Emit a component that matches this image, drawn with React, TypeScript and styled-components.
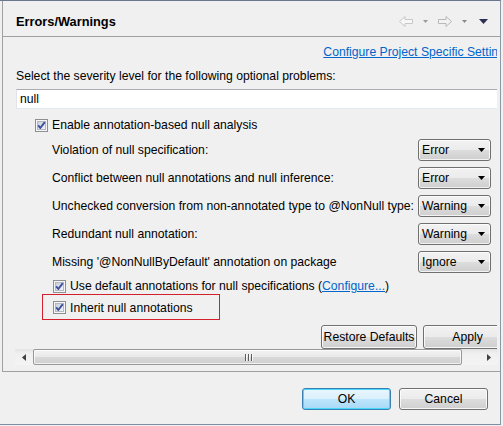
import React from 'react';
import styled, { createGlobalStyle } from 'styled-components';

const Global = createGlobalStyle`
  html, body { margin: 0; padding: 0; background: #f0f0f0; overflow: hidden; }
  body {
    font-family: "Liberation Sans", Arial, sans-serif;
    font-size: 12.2px;
    color: #000;
  }
`;

const Window = styled.div`
  box-sizing: border-box;
  width: 501px;
  height: 425px;
  border-top: 1px solid #6a778c;
  border-right: 1px solid #8c97a8;
  border-bottom: 1px solid #7f8ea5;
  background: #f0f0f0;
  display: flex;
  flex-direction: column;
  overflow: hidden;
`;

const Page = styled.div`
  box-sizing: border-box;
  height: 371px;
  margin-left: 2px;
  border-left: 1px solid #a0a0a0;
  border-bottom: 1px solid #a0a0a0;
  display: flex;
  flex-direction: column;
`;

const Header = styled.div`
  box-sizing: border-box;
  height: 36px;
  flex: none;
  padding: 6px 12px 0 13px;
  border-bottom: 1px solid #a0a0a0;
  display: flex;
  align-items: center;
`;

const Title = styled.h1`
  margin: 0;
  flex: 1;
  font-size: 12.8px;
  font-weight: bold;
  line-height: 16px;
`;

const Toolbar = styled.div`
  display: flex;
  align-items: center;
  gap: 10px;
`;

const Body = styled.div`
  flex: 1;
  display: flex;
  flex-direction: column;
  padding: 0 2px 0 12px;
  min-height: 0;
`;

const Clip = styled.div`
  overflow: hidden;
  margin-right: 1px;
`;

const Content = styled.div`
  box-sizing: border-box;
  width: 497px;
  padding-left: 1px;
  display: flex;
  flex-direction: column;
`;

const LinkRow = styled.div`
  margin-top: 7px;
  height: 16px;
  line-height: 16px;
  text-align: right;
  padding-right: 1px;
  white-space: nowrap;
`;

const Link = styled.a`
  color: #0066cc;
  text-decoration: underline;
  cursor: pointer;
`;

const Description = styled.div`
  margin-top: 8px;
  height: 16px;
  line-height: 16px;
  white-space: nowrap;
`;

const Filter = styled.input`
  box-sizing: border-box;
  margin: 5px 0 0 0;
  width: 100%;
  height: 20px;
  border: 1px solid #abadb3;
  border-color: #abadb3 #dbdfe6 #e3e9ef #e2e3ea;
  background: #fff;
  padding: 0 3px;
  font: inherit;
  color: #000;
  outline: none;
`;

const CheckRow = styled.label<{ $indent: number; $top: number }>`
  display: flex;
  align-items: center;
  gap: 4px;
  height: 16px;
  line-height: 16px;
  margin-top: ${p => p.$top}px;
  padding-left: ${p => p.$indent}px;
  white-space: nowrap;
`;

const Highlight = styled.div`
  box-sizing: border-box;
  margin-left: 26px;
  width: 178px;
  height: 26px;
  border: 1px solid #d4202c;
  padding-left: 10px;
  display: flex;
  align-items: center;
`;

const InnerCheck = styled.label`
  display: flex;
  align-items: center;
  gap: 4px;
  height: 16px;
  line-height: 16px;
  padding-top: 1px;
  white-space: nowrap;
`;

const Options = styled.div`
  margin: 6px 21px 0 36px;
  display: flex;
  flex-direction: column;
  gap: 6px;
`;

const OptionRow = styled.div`
  display: flex;
  align-items: center;
  height: 22px;
`;

const OptionLabel = styled.span`
  flex: 1;
  white-space: nowrap;
`;

const Combo = styled.div`
  box-sizing: border-box;
  width: 73px;
  height: 22px;
  border: 1px solid #707070;
  border-radius: 3px;
  background: linear-gradient(#f2f2f2 0%, #ebebeb 50%, #dddddd 50%, #cfcfcf 100%);
  box-shadow: inset 0 0 0 1px rgba(255, 255, 255, 0.75);
  display: flex;
  align-items: center;
  padding: 0 5px 0 3px;
  line-height: 16px;
`;

const ComboText = styled.span`
  flex: 1;
`;

const Buttons = styled.div`
  margin-top: 5px;
  display: flex;
  justify-content: flex-end;
  gap: 6px;
`;

const PushButton = styled.button<{ $w: number; $h?: number; $default?: boolean }>`
  box-sizing: border-box;
  width: ${p => p.$w}px;
  height: ${p => p.$h ?? 24}px;
  margin: 0;
  padding: 0;
  font: inherit;
  color: #000;
  border: 1px solid ${p => (p.$default ? '#3c7fb1' : '#707070')};
  border-radius: 3px;
  background: ${p =>
    p.$default
      ? 'linear-gradient(#eaf6fd 0%, #d9f0fc 50%, #bee6fd 50%, #a7d9f5 100%)'
      : 'linear-gradient(#f2f2f2 0%, #ebebeb 50%, #dddddd 50%, #cfcfcf 100%)'};
  box-shadow: ${p =>
    p.$default ? 'inset 0 0 0 1px #48d8fb' : 'inset 0 0 0 1px rgba(255,255,255,0.8)'};
`;

const HScroll = styled.div`
  box-sizing: border-box;
  height: 16px;
  flex: none;
  display: flex;
  background: linear-gradient(#e3e3e3, #f0f0f0 30%, #f4f4f4);
`;

const ScrollArrow = styled.div`
  width: 18px;
  flex: none;
  display: flex;
  align-items: center;
  justify-content: center;
`;

const Thumb = styled.div`
  box-sizing: border-box;
  width: 429px;
  height: 16px;
  border: 1px solid #989898;
  border-radius: 2px;
  background: linear-gradient(#f3f3f3 0%, #e8e8e8 50%, #d8d8d8 50%, #d0d0d0 100%);
  box-shadow: inset 0 0 0 1px rgba(255,255,255,0.7);
  display: flex;
  align-items: center;
  justify-content: center;
  padding-left: 2px;
`;

const Track = styled.div`
  flex: 1;
`;

const ButtonBar = styled.div`
  flex: 1;
  display: flex;
  justify-content: flex-end;
  align-items: flex-start;
  gap: 8px;
  padding: 16px 12px 0 0;
`;

const CheckIcon = () => (
  <svg width="13" height="13" viewBox="0 0 13 13" style={{ flex: 'none' }}>
    <defs>
      <linearGradient id="cbfill" x1="0" y1="0" x2="1" y2="1">
        <stop offset="0" stopColor="#c6cdd8" />
        <stop offset="1" stopColor="#f5f7fa" />
      </linearGradient>
    </defs>
    <rect x="0.5" y="0.5" width="12" height="12" fill="#f6f6f6" stroke="#8e8f8f" />
    <rect x="2.5" y="2.5" width="8" height="8" fill="url(#cbfill)" stroke="#b4b9c0" />
    <path d="M3.2 6.4 L5.3 9 L9.8 3.2" fill="none" stroke="#3a4f9f" strokeWidth="1.9" strokeLinejoin="round" />
  </svg>
);

const ComboArrow = () => (
  <svg width="7" height="4" viewBox="0 0 7 4">
    <polygon points="0,0 7,0 3.5,4" fill="#000" />
  </svg>
);

const NavArrow = ({ dir }: { dir: 'left' | 'right' }) => (
  <svg width="14" height="11" viewBox="0 0 14 11">
    <polygon
      points={dir === 'left' ? '0.5,5.5 6,0.5 6,3.5 13.5,3.5 13.5,7.5 6,7.5 6,10.5' : '13.5,5.5 8,0.5 8,3.5 0.5,3.5 0.5,7.5 8,7.5 8,10.5'}
      fill={dir === 'left' ? '#f7f7f7' : '#f2f2f2'}
      stroke={dir === 'left' ? '#c8c8c8' : '#b8b8b8'}
    />
  </svg>
);

const SmallDrop = ({ color }: { color: string }) => (
  <svg width="5" height="3" viewBox="0 0 5 3">
    <polygon points="0,0 5,0 2.5,3" fill={color} />
  </svg>
);

const ViewMenu = () => (
  <svg width="9" height="5" viewBox="0 0 9 5" style={{ marginLeft: 2 }}>
    <polygon points="0,0 9,0 4.5,5" fill="#2e2f55" />
  </svg>
);

const ScrollTri = ({ dir }: { dir: 'left' | 'right' }) => (
  <svg width="4" height="7" viewBox="0 0 4 7">
    <polygon points={dir === 'left' ? '4,0 4,7 0,3.5' : '0,0 0,7 4,3.5'} fill="#404040" />
  </svg>
);

const Grip = () => (
  <svg width="8" height="7" viewBox="0 0 8 7">
    <g fill="#5a5a5a">
      <rect x="0" y="0" width="1" height="7" />
      <rect x="3" y="0" width="1" height="7" />
      <rect x="6" y="0" width="1" height="7" />
    </g>
    <g fill="#ffffff" opacity="0.8">
      <rect x="1" y="0" width="1" height="7" />
      <rect x="4" y="0" width="1" height="7" />
      <rect x="7" y="0" width="1" height="7" />
    </g>
  </svg>
);

const options: { label: string; value: string }[] = [
  { label: 'Violation of null specification:', value: 'Error' },
  { label: 'Conflict between null annotations and null inference:', value: 'Error' },
  { label: 'Unchecked conversion from non-annotated type to @NonNull type:', value: 'Warning' },
  { label: 'Redundant null annotation:', value: 'Warning' },
  { label: "Missing '@NonNullByDefault' annotation on package", value: 'Ignore' },
];

export default function App() {
  return (
    <>
      <Global />
      <Window>
        <Page>
          <Header>
            <Title>Errors/Warnings</Title>
            <Toolbar>
              <NavArrow dir="left" />
              <SmallDrop color="#9a9a9a" />
              <NavArrow dir="right" />
              <SmallDrop color="#8a8a8a" />
              <ViewMenu />
            </Toolbar>
          </Header>
          <Body>
            <Clip>
              <Content>
                <LinkRow>
                  <Link>Configure Project Specific Settings</Link>
                </LinkRow>
                <Description>Select the severity level for the following optional problems:</Description>
                <Filter readOnly value="null" />
                <CheckRow $indent={19} $top={8}>
                  <CheckIcon />
                  <span>Enable annotation-based null analysis</span>
                </CheckRow>
                <Options>
                  {options.map(o => (
                    <OptionRow key={o.label}>
                      <OptionLabel>{o.label}</OptionLabel>
                      <Combo>
                        <ComboText>{o.value}</ComboText>
                        <ComboArrow />
                      </Combo>
                    </OptionRow>
                  ))}
                </Options>
                <CheckRow $indent={37} $top={5}>
                  <CheckIcon />
                  <span>
                    Use default annotations for null specifications (<Link>Configure...</Link>)
                  </span>
                </CheckRow>
                <Highlight>
                  <InnerCheck>
                    <CheckIcon />
                    <span>Inherit null annotations</span>
                  </InnerCheck>
                </Highlight>
                <Buttons>
                  <PushButton $w={96}>Restore Defaults</PushButton>
                  <PushButton $w={89}>Apply</PushButton>
                </Buttons>
              </Content>
            </Clip>
            <HScroll>
              <ScrollArrow>
                <ScrollTri dir="left" />
              </ScrollArrow>
              <Thumb>
                <Grip />
              </Thumb>
              <Track />
              <ScrollArrow>
                <ScrollTri dir="right" />
              </ScrollArrow>
            </HScroll>
          </Body>
        </Page>
        <ButtonBar>
          <PushButton $w={89} $h={22} $default>OK</PushButton>
          <PushButton $w={89} $h={22}>Cancel</PushButton>
        </ButtonBar>
      </Window>
    </>
  );
}
